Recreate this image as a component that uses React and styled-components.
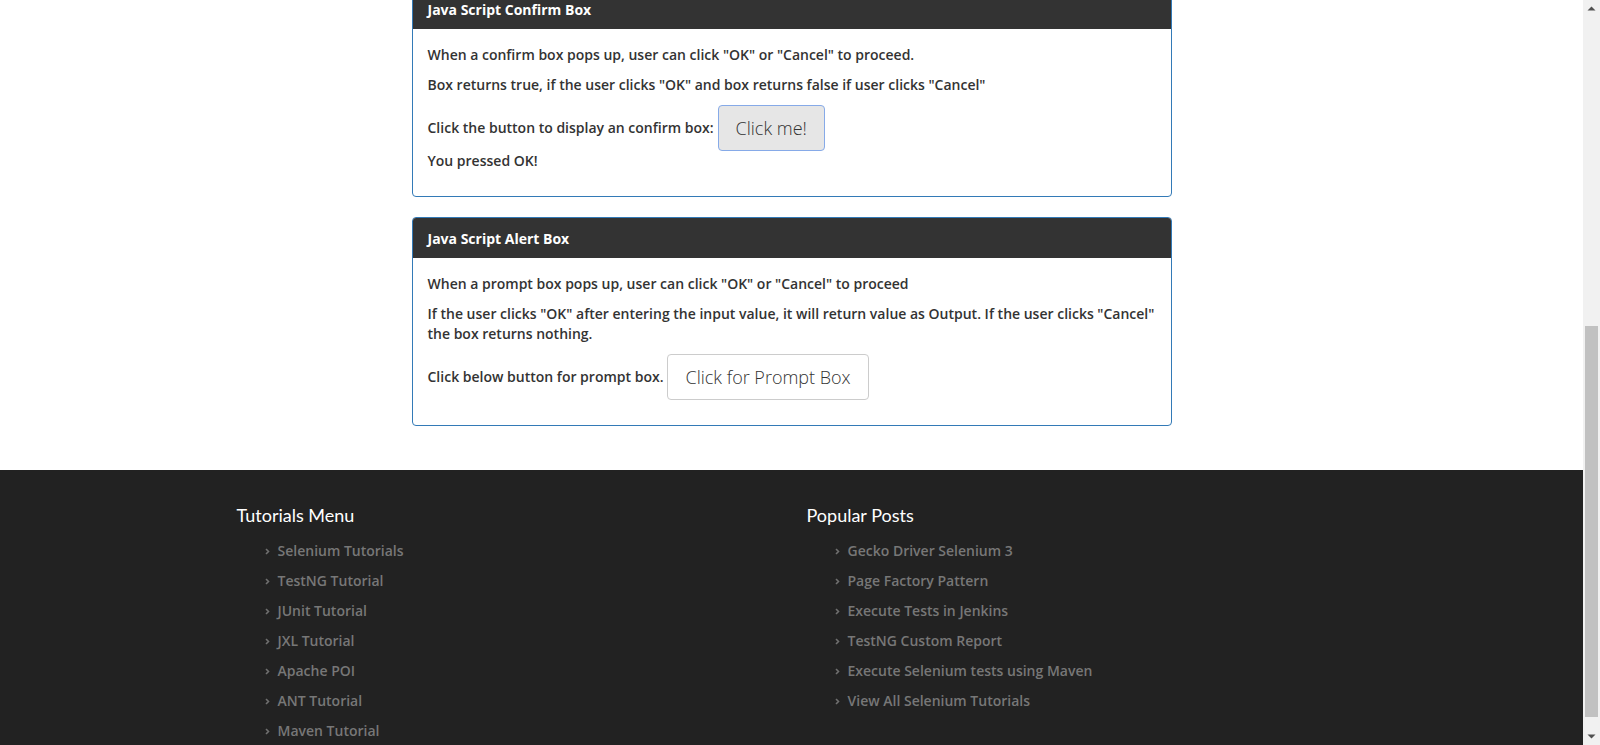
import React from "react";
import styled, { createGlobalStyle } from "styled-components";

const GlobalStyle = createGlobalStyle`
  html, body {
    margin: 0;
    padding: 0;
    overflow: hidden;
    background: #fff;
    font-family: "Open Sans", "Lato", sans-serif;
  }
`;

let Screen = styled.div`
  display: flex;
  height: 745px;
  overflow: hidden;
`;

let Page = styled.div`
  flex: 1;
  min-width: 0;
  display: flex;
  flex-direction: column;
`;

let Main = styled.div`
  display: flex;
  flex-direction: column;
  align-items: center;
  padding-bottom: 44px;
`;

let Panel = styled.div`
  width: 760px;
  box-sizing: border-box;
  border: 1px solid #337ab7;
  border-radius: 4px;
  overflow: hidden;
  margin-top: ${(p) => p.top || 0}px;
  margin-bottom: ${(p) => p.bottom || 0}px;
`;

let PanelHeading = styled.div`
  height: 40px;
  background: #333;
  color: #fff;
  font-weight: 700;
  font-size: 14px;
  display: flex;
  align-items: center;
  padding: 0 15px;
`;

let PanelBody = styled.div`
  padding: 16px 15px 15px;
`;

let Para = styled.p`
  margin: 0 0 10px;
  font-size: 14px;
  line-height: 20px;
  font-weight: 600;
  color: #333;
`;

let ButtonRow = styled(Para)`
  display: flex;
  align-items: center;
  gap: 4px;
  margin-bottom: ${(p) => p.bottom}px;
`;

let Btn = styled.button`
  height: 46px;
  padding: 0 17px;
  font-family: "Open Sans", "Lato", sans-serif;
  font-size: 18px;
  font-weight: 300;
  color: #333;
  border-radius: 4px;
  cursor: pointer;
  ${(p) =>
    p.active
      ? "background:#e6e6e6;border:1px solid #86aae8;"
      : "background:#fff;border:1px solid #ccc;"}
`;

let Footer = styled.footer`
  flex: 1;
  background: #222;
  padding-top: 30px;
`;

let FooterInner = styled.div`
  width: 1140px;
  margin: 0 auto;
  display: grid;
  grid-template-columns: 1fr 1fr;
`;

let FooterCol = styled.div`
  padding: 0 15px;
`;

let FooterTitle = styled.h3`
  margin: 0 0 5px;
  font-family: "Lato", sans-serif;
  font-size: 18px;
  line-height: 30px;
  font-weight: 400;
  color: #fff;
`;

let LinkList = styled.ul`
  list-style: none;
  margin: 0;
  padding-left: 28px;
`;

let LinkItem = styled.li`
  height: 30px;
  display: flex;
  align-items: center;
  gap: 8px;
  font-size: 14px;
  font-weight: 600;
  color: #777;
  svg {
    margin-top: 3px;
  }
`;

let Scrollbar = styled.div`
  width: 17px;
  background: #f1f1f1;
  display: flex;
  flex-direction: column;
`;

let ScrollArrow = styled.div`
  height: 17px;
  display: flex;
  align-items: center;
  justify-content: center;
`;

let ScrollTrack = styled.div`
  flex: 1;
  display: flex;
  flex-direction: column;
  padding: 0 2px;
`;

let Thumb = styled.div`
  height: 391px;
  background: #c1c1c1;
`;

let Chevron = () => (
  <svg width="5" height="7" viewBox="0 0 5 7">
    <path d="M1 1 L3.5 3.5 L1 6" fill="none" stroke="#6f6f6f" strokeWidth="1.6" />
  </svg>
);

let Arrow = ({ down }) => (
  <svg width="9" height="5" viewBox="0 0 9 5">
    <path d={down ? "M0.5 0.5 H8.5 L4.5 4.5 Z" : "M0.5 4.5 H8.5 L4.5 0.5 Z"} fill="#505050" />
  </svg>
);

const tutorials = [
  "Selenium Tutorials",
  "TestNG Tutorial",
  "JUnit Tutorial",
  "JXL Tutorial",
  "Apache POI",
  "ANT Tutorial",
  "Maven Tutorial",
];

const posts = [
  "Gecko Driver Selenium 3",
  "Page Factory Pattern",
  "Execute Tests in Jenkins",
  "TestNG Custom Report",
  "Execute Selenium tests using Maven",
  "View All Selenium Tutorials",
];

export default function App() {
  // where the page is scrolled to, as a share of the free track
  let scrollShare = 0.965;
  let trackFree = 711 - 391;

  return (
    <>
      <GlobalStyle />
      <Screen>
        <Page>
          <Main>
            <Panel top={-12} bottom={20}>
              <PanelHeading>Java Script Confirm Box</PanelHeading>
              <PanelBody>
                <Para>When a confirm box pops up, user can click "OK" or "Cancel" to proceed.</Para>
                <Para>Box returns true, if the user clicks "OK" and box returns false if user clicks "Cancel"</Para>
                <ButtonRow bottom={0}>
                  Click the button to display an confirm box:
                  <Btn active>Click me!</Btn>
                </ButtonRow>
                <Para>You pressed OK!</Para>
              </PanelBody>
            </Panel>
            <Panel>
              <PanelHeading>Java Script Alert Box</PanelHeading>
              <PanelBody>
                <Para>When a prompt box pops up, user can click "OK" or "Cancel" to proceed</Para>
                <Para>
                  If the user clicks "OK" after entering the input value, it will return value as Output. If the user
                  clicks "Cancel" the box returns nothing.
                </Para>
                <ButtonRow bottom={10}>
                  Click below button for prompt box.
                  <Btn>Click for Prompt Box</Btn>
                </ButtonRow>
              </PanelBody>
            </Panel>
          </Main>
          <Footer>
            <FooterInner>
              <FooterCol>
                <FooterTitle>Tutorials Menu</FooterTitle>
                <LinkList>
                  {tutorials.map((t) => (
                    <LinkItem key={t}>
                      <Chevron />
                      {t}
                    </LinkItem>
                  ))}
                </LinkList>
              </FooterCol>
              <FooterCol>
                <FooterTitle>Popular Posts</FooterTitle>
                <LinkList>
                  {posts.map((t) => (
                    <LinkItem key={t}>
                      <Chevron />
                      {t}
                    </LinkItem>
                  ))}
                </LinkList>
              </FooterCol>
            </FooterInner>
          </Footer>
        </Page>
        <Scrollbar>
          <ScrollArrow>
            <Arrow />
          </ScrollArrow>
          <ScrollTrack>
            <Thumb style={{ marginTop: Math.round(scrollShare * trackFree) }} />
          </ScrollTrack>
          <ScrollArrow>
            <Arrow down />
          </ScrollArrow>
        </Scrollbar>
      </Screen>
    </>
  );
}
